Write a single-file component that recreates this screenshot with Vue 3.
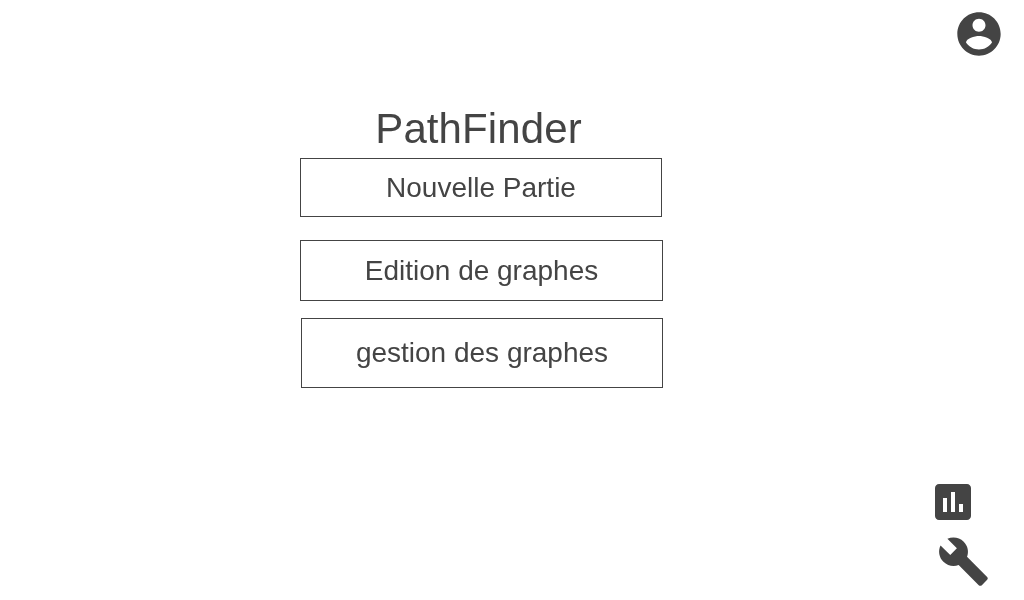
<script setup>
const entries = [
  { id: 'play', label: 'Nouvelle Partie' },
  { id: 'edit', label: 'Edition de graphes' },
  { id: 'manage', label: 'gestion des graphes' },
]
</script>

<template>
  <div class="screen">
    <main class="menu">
      <h1>PathFinder</h1>
      <button v-for="e in entries" :key="e.id" :class="['entry', e.id]">{{ e.label }}</button>
    </main>
    <aside class="tools">
      <svg class="account" viewBox="0 0 24 24"><path d="M12 2C6.480 2 2 6.480 2 12s4.480 10 10 10 10-4.480 10-10S17.520 2 12 2zm0 3c1.660 0 3 1.340 3 3s-1.340 3-3 3-3-1.340-3-3 1.340-3 3-3zm0 14.200c-2.500 0-4.710-1.280-6-3.220.030-1.990 4-3.080 6-3.080 1.990 0 5.970 1.090 6 3.080-1.290 1.940-3.500 3.220-6 3.220z"/></svg>
      <svg class="stats" viewBox="0 0 24 24"><path d="M19 3H5c-1.100 0-2 .9-2 2v14c0 1.100.9 2 2 2h14c1.100 0 2-.9 2-2V5c0-1.100-.9-2-2-2zM9 17H7v-7h2v7zm4 0h-2V7h2v10zm4 0h-2v-4h2v4z"/></svg>
      <svg class="settings" viewBox="0 0 24 24"><path d="M22.700 19l-9.100-9.100c.9-2.300.4-5-1.500-6.900-2-2-5-2.400-7.400-1.300L9 6 6 9 1.600 4.700C.4 7.100.9 10.100 2.900 12.100c1.900 1.900 4.600 2.400 6.900 1.500l9.100 9.100c.4.4 1 .4 1.400 0l2.300-2.300c.5-.4.5-1.100.1-1.400z"/></svg>
    </aside>
  </div>
</template>

<style scoped>
.screen {
  display: flex;
  justify-content: space-between;
  width: 1024px;
  height: 600px;
  color: #444;
  font-family: "Liberation Sans", Arial, sans-serif;
  overflow: hidden;
}
.menu {
  width: 363px;
  margin-left: 300px;
  padding-top: 105px;
  display: flex;
  flex-direction: column;
  will-change: transform;
}
h1 {
  margin: 0 6px 5px 0;
  height: 48px;
  line-height: 48px;
  font-size: 42px;
  letter-spacing: 0.1px;
  font-weight: 400;
  text-align: center;
}
.entry {
  box-sizing: border-box;
  margin: 0;
  padding: 0;
  background: transparent;
  border: 1px solid #444;
  color: inherit;
  font: 28px/32px "Liberation Sans", Arial, sans-serif;
}
.play { height: 59px; width: 362px; }
.edit { height: 61px; width: 363px; margin-top: 23px; }
.manage { height: 70px; width: 362px; margin: 17px 0 0 1px; }
.tools {
  display: flex;
  flex-direction: column;
  width: 93px;
  padding-top: 8px;
}
svg { display: block; fill: #444; flex: none; }
.account { width: 52px; height: 52px; margin-left: 22px; }
.stats { width: 48px; height: 48px; margin: 418px 0 0 -2px; }
.settings { width: 53px; height: 53px; margin: 9px 0 0 6px; }
</style>
